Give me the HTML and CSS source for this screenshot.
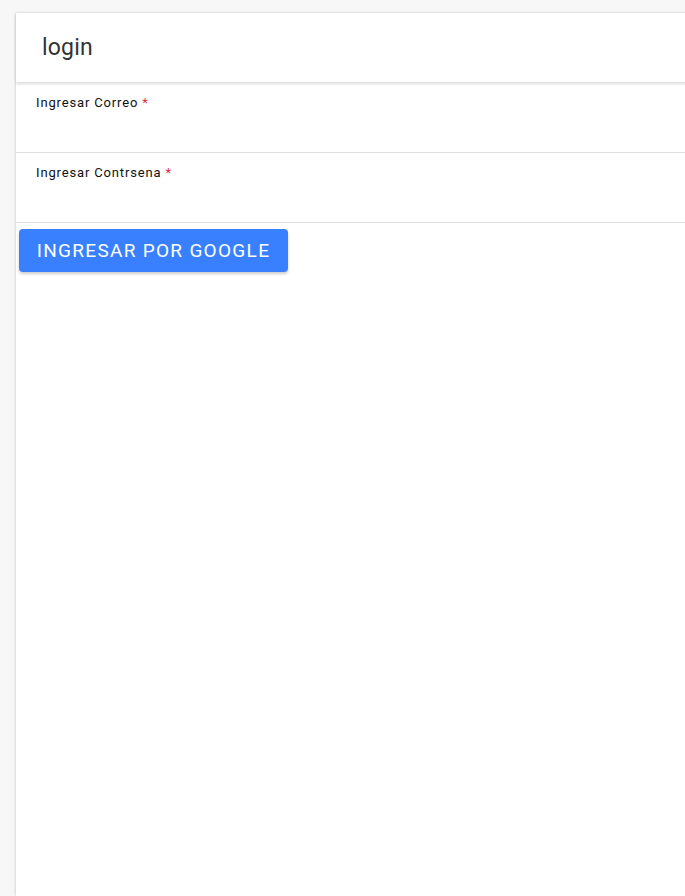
FILE: index.html
```html
<!DOCTYPE html>
<html lang="es">
<head>
<meta charset="utf-8">
<link rel="stylesheet" href="styles.css">
</head>
<body>
<div class="page">
  <div class="card">
    <header class="toolbar"><h1 class="title">login</h1></header>
    <div class="item"><label class="label">Ingresar Correo <span class="req">*</span></label><input class="input" type="email"></div>
    <div class="item"><label class="label">Ingresar Contrsena <span class="req">*</span></label><input class="input" type="password"></div>
    <button class="btn">INGRESAR POR GOOGLE</button>
  </div>
</div>
</body>
</html>
```
FILE: styles.css
```css
html, body { margin: 0; height: 100%; }
body { background: #f7f7f7; font-family: Roboto, "Noto Sans", sans-serif; overflow: hidden; }
.page { padding: 13px 0 0 16px; height: 100%; box-sizing: border-box; }
.card {
  background: #fff;
  height: 100%;
  margin-right: -20px;
  box-shadow: 0 0 3px rgba(0,0,0,0.12), -1px 0 2px rgba(0,0,0,0.06);
  display: flex; flex-direction: column; align-items: flex-start;
}
.toolbar {
  align-self: stretch;
  height: 69px;
  display: flex; align-items: center;
  padding-left: 26px;
  box-shadow: 0 2px 3px rgba(0,0,0,0.14);
  position: relative; z-index: 1;
}
.title { margin: 0; font-size: 23px; font-weight: 400; color: #333; letter-spacing: 0.2px; }
.item {
  align-self: stretch;
  height: 69px;
  border-bottom: 1px solid #dedede;
  padding-left: 20px;
  display: flex; flex-direction: column;
}
.item:first-of-type { margin-top: 1px; }
.label { font-size: 13px; color: #111; margin-top: 12px; letter-spacing: 0.85px; }
.req { color: #e0294a; }
.input { border: 0; outline: 0; background: transparent; height: 30px; font: inherit; padding: 0; }
.btn {
  margin: 6px 0 0 3px;
  width: 269px; height: 43px;
  background: #3880ff; color: #fff;
  border: 0; border-radius: 4px;
  font-family: Roboto, sans-serif; font-size: 19px; font-weight: 400; letter-spacing: 1.3px;
  box-shadow: 0 2px 3px rgba(0,0,0,0.2);
  padding: 0;
}
```
